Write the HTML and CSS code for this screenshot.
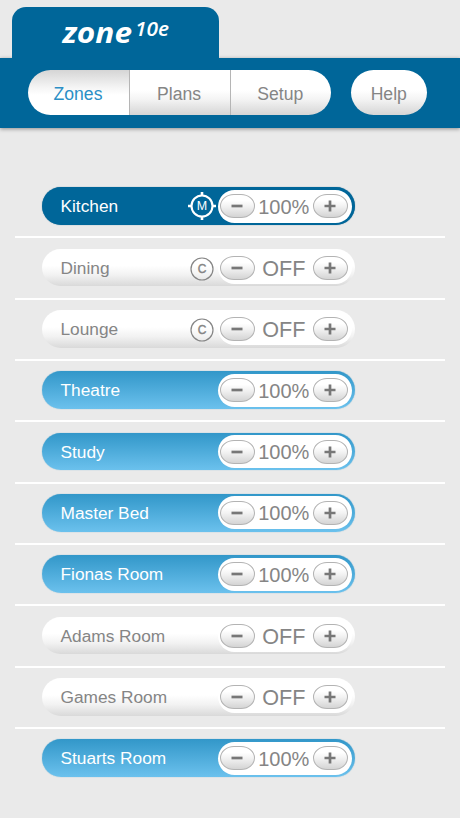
FILE: index.html
```html
<!DOCTYPE html>
<html lang="en">
<head>
<meta charset="utf-8">
<title>zone10e</title>
<link rel="stylesheet" href="styles.css">
</head>
<body>
<svg class="defs" aria-hidden="true">
  <symbol id="minus" viewBox="0 0 12 12"><path d="M.5 6h11" stroke="currentColor" stroke-width="2.7"/></symbol>
  <symbol id="plus" viewBox="0 0 12 12"><path d="M.5 6h11M6 .5v11" stroke="currentColor" stroke-width="2.7"/></symbol>
</svg>
<header class="header">
  <div class="brand">
    <svg class="logo" viewBox="0 0 110 34">
      <text class="logo-name" x="0.5" y="26.8" textLength="69.5" lengthAdjust="spacingAndGlyphs">zone</text>
      <text class="logo-model" x="73" y="19.5" textLength="34" lengthAdjust="spacingAndGlyphs">10e</text>
    </svg>
  </div>
  <nav class="bar">
    <div class="tabs">
      <a class="tab active">Zones</a>
      <a class="tab">Plans</a>
      <a class="tab">Setup</a>
    </div>
    <a class="help">Help</a>
  </nav>
</header>
<main class="zones" id="zones"></main>
<script src="script.js"></script>
</body>
</html>
```
FILE: styles.css
```css
* { box-sizing: border-box; }

body {
  margin: 0;
  height: 818px;
  overflow: hidden;
  background: #eaeaea;
  font-family: "Liberation Sans", Arial, sans-serif;
  font-size: 17.3px;
  color: #858585;
}

.defs { position: absolute; width: 0; height: 0; }

.header { padding-top: 6.5px; height: 176.9px; }

.brand {
  position: relative;
  z-index: 1;
  width: 207.5px;
  height: 51.5px;
  margin-left: 11.5px;
  padding: 9.5px 0 0 50.5px;
  border-radius: 14px 14px 0 0;
  background: #006699;
}

.logo { display: block; width: 110px; height: 34px; overflow: visible; fill: #fff; font-family: "Open Sans", "Noto Sans", sans-serif; font-style: italic; }
.logo-name { font-size: 29px; font-weight: 700; }
.logo-model { font-size: 20px; font-weight: 600; }

.bar {
  display: flex;
  gap: 20px;
  height: 69.5px;
  padding: 12.3px 0 0 27.5px;
  background: #006699;
  box-shadow: 0 1px 4px rgba(0, 0, 0, .4);
}

.tabs { display: grid; grid-template-columns: 101px 101px 101.5px; width: 303.5px; height: 45px; border-radius: 23px; overflow: hidden; font-size: 17.6px; }

.tab, .help {
  display: flex;
  align-items: center;
  justify-content: center;
  height: 45px;
  padding-top: 2.6px;
  background: linear-gradient(#fff 45%, #f4f4f4 65%, #d5d5d5);
}
.tab + .tab { border-left: 1px solid #b5b5b5; padding-right: 1px; }
.tab.active { color: #2b8fc6; background: linear-gradient(#d5d5d5, #f4f4f4 38%, #fff 55%); }
.help { width: 75.5px; border-radius: 23px; font-size: 17.6px; }

.zones { padding: 0 15px; }

.row { height: 61.33px; padding: 10.6px 0 0 26.5px; border-bottom: 2px solid #fff; }
.row:last-child { border-bottom-color: transparent; }

.pill {
  display: flex;
  align-items: center;
  width: 313px;
  height: 37.5px;
  padding: 0 2.5px 0 19px;
  border-radius: 19px;
}
.pill.main { background: #006699; color: #fff; box-shadow: 0 0 1px #467f9c; }
.pill.on { background: linear-gradient(#3297c9, #6bc1ed); color: #fff; box-shadow: 0 0 1px #60a5c5; }
.pill.off { background: linear-gradient(#fff 45%, #f2f2f2 70%, #d9d9d9); }

.name { flex: 1; padding-top: 1.5px; }

.badge { width: 30px; height: 30px; margin-right: 1px; overflow: visible; }
.badge text { text-anchor: middle; font-size: 12.5px; fill: currentColor; }
.badge circle, .badge path { fill: none; stroke: currentColor; }
.badge .letter-c { font-size: 12px; stroke: currentColor; stroke-width: .4; }

.control {
  display: flex;
  align-items: center;
  justify-content: space-between;
  width: 134.5px;
  height: 33px;
  padding: 0 4.5px 0 2.5px;
  border-radius: 17px;
  background: #fff;
  color: #858585;
}

.step {
  display: flex;
  align-items: center;
  justify-content: center;
  width: 34.5px;
  height: 24px;
  border: 1px solid #b3b3b3;
  border-radius: 14px / 12px;
  background: linear-gradient(#fff 25%, #f3f3f3 50%, #d4d4d4);
  color: #777;
}
.step svg { width: 12px; height: 12px; }

.value { font-size: 20px; padding-top: 2px; }
.off .value { font-size: 21.6px; }
```
FILE: script.js
```js
const zones = [
  ["Kitchen", "main", "M"], ["Dining", "off", "C"], ["Lounge", "off", "C"],
  ["Theatre", "on"], ["Study", "on"], ["Master Bed", "on"], ["Fionas Room", "on"],
  ["Adams Room", "off"], ["Games Room", "off"], ["Stuarts Room", "on"]
];
const badges = {
  M: '<svg class="badge" viewBox="0 0 30 30"><circle cx="15" cy="15" r="10.5" stroke-width="2.1"/><path d="M15 1v4M15 25v4M1 15h4M25 15h4" stroke-width="2.6"/><text x="15" y="19.4">M</text></svg>',
  C: '<svg class="badge" viewBox="0 0 30 30"><circle cx="15" cy="16" r="11" stroke-width="1.2"/><text class="letter-c" x="15" y="20.3">C</text></svg>'
};
document.getElementById("zones").innerHTML = zones.map(([name, state, badge]) => `
  <div class="row"><div class="pill ${state}">
    <span class="name">${name}</span>${badge ? badges[badge] : ""}
    <div class="control">
      <span class="step"><svg><use href="#minus"/></svg></span>
      <span class="value">${state === "off" ? "OFF" : "100%"}</span>
      <span class="step"><svg><use href="#plus"/></svg></span>
    </div>
  </div></div>`).join("");
```
